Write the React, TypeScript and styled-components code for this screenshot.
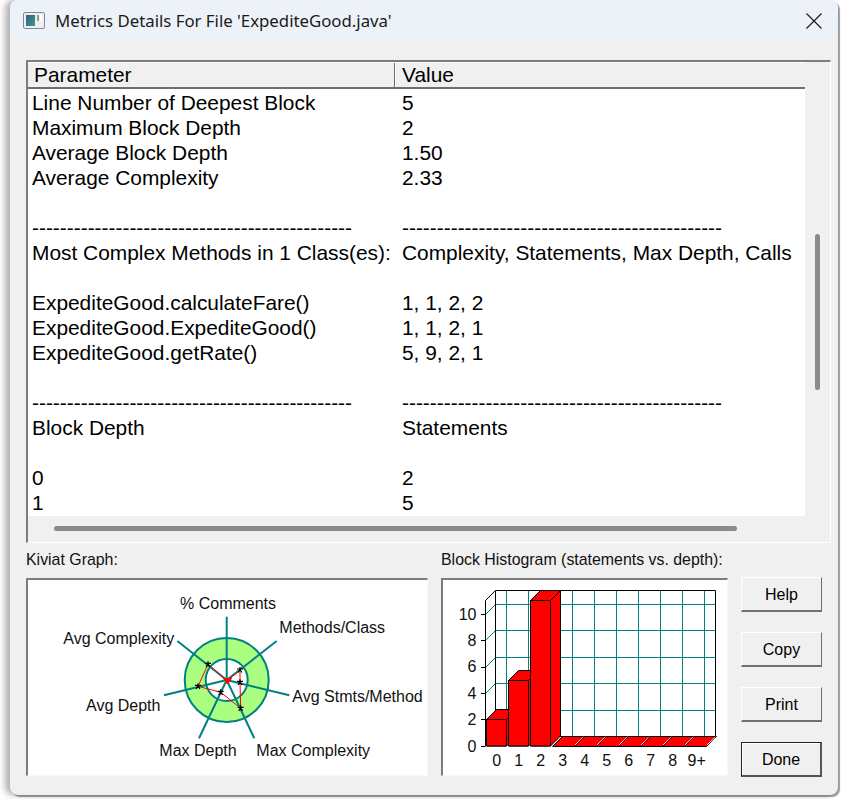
import React from "react";
import styled, { createGlobalStyle } from "styled-components";

const Global = createGlobalStyle`
  html, body { margin: 0; padding: 0; background: #fff; overflow: hidden; }
  #root { width: 846px; height: 799px; }
`;

const Page = styled.div`
  width: 846px;
  height: 799px;
  padding-left: 10px;
  box-sizing: border-box;
  overflow: hidden;
  font-family: "Liberation Sans", Arial, sans-serif;
  color: #000;
`;

const Win = styled.div`
  width: 828px;
  height: 795px;
  display: flex;
  flex-direction: column;
  background: #f0f0f0;
  border-radius: 8px;
  box-shadow: -5px 0 6px rgba(0, 0, 0, 0.3), 2px 2px 1px #9c9c9c;
`;

const TitleBar = styled.div`
  height: 41px;
  flex: none;
  display: flex;
  align-items: center;
  padding: 0 16px 0 13px;
  background: #edf2f8;
  border-radius: 8px 8px 0 0;
`;

const TitleText = styled.div`
  margin-left: 10px;
  flex: 1;
  font-family: "Noto Sans", sans-serif;
  font-size: 16.8px;
  color: #1a1a1a;
`;

const Body = styled.div`
  flex: 1;
  display: flex;
  flex-direction: column;
  padding: 19px 7px 0 16px;
`;

const ListFrame = styled.div`
  height: 483px;
  box-sizing: border-box;
  display: grid;
  grid-template-columns: 1fr 25px;
  grid-template-rows: 1fr 26px;
  border: 1px solid #fff;
  border-top: 2px solid #7d7d7d;
  border-left: 2px solid #7d7d7d;
`;

const TableArea = styled.div`
  background: #fff;
  overflow: hidden;
  min-width: 0;
`;

const HeaderRow = styled.div`
  display: grid;
  grid-template-columns: 367px 1fr;
  height: 27px;
  box-sizing: border-box;
  background: #f0f0f0;
  border-bottom: 2px solid #6e6e6e;
  border-top: 1px solid #fff;
  margin-bottom: 1px;
`;

const HeaderCell = styled.div<{ $last?: boolean }>`
  font-size: 20.9px;
  line-height: 24px;
  padding-left: ${(p) => (p.$last ? "7px" : "6px")};
  border-right: ${(p) => (p.$last ? "none" : "1px solid #6e6e6e")};
  box-shadow: ${(p) => (p.$last ? "inset 1px 0 0 #fff" : "none")};
`;

const Row = styled.div`
  display: grid;
  grid-template-columns: 370px 1fr;
  height: 25px;
  padding-left: 4px;
  font-size: 20.9px;
  line-height: 25px;
  white-space: nowrap;
`;

const VTrack = styled.div`
  padding-left: 10px;
`;

const VThumb = styled.div`
  width: 5px;
  height: 156px;
  margin-top: 172px;
  background: #8a8a8a;
  border-radius: 3px;
`;

const HTrack = styled.div`
  padding: 10px 0 0 26px;
`;

const HThumb = styled.div`
  width: 683px;
  height: 5px;
  background: #8a8a8a;
  border-radius: 3px;
`;

const Lower = styled.div`
  display: grid;
  grid-template-columns: 402px 287px 82px;
  column-gap: 13px;
  margin-top: 7px;
`;

const ChartCol = styled.div`
  display: flex;
  flex-direction: column;
`;

const ChartLabel = styled.div`
  height: 28px;
  font-size: 15.9px;
  line-height: 20px;
  color: #111;
  white-space: nowrap;
`;

const ChartFrame = styled.div`
  height: 198px;
  box-sizing: border-box;
  background: #fff;
  border: 1px solid #f8f8f8;
  border-top: 2px solid #7d7d7d;
  border-left: 2px solid #7d7d7d;
  svg { display: block; }
`;

const Buttons = styled.div`
  display: flex;
  flex-direction: column;
  gap: 20px;
  padding-top: 27px;
`;

const Btn = styled.button<{ $primary?: boolean }>`
  width: 81px;
  height: 35px;
  padding: 2px 0 0;
  font-family: "Liberation Sans", Arial, sans-serif;
  font-size: 16px;
  color: #000;
  background: #f0f0f0;
  border-style: solid;
  border-width: ${(p) => (p.$primary ? "1px 2px 2px 1px" : "1px 1px 2px 1px")};
  border-color: ${(p) =>
    p.$primary ? "#222 #555 #555 #222" : "#fff #707070 #707070 #fff"};
  box-shadow: ${(p) => (p.$primary ? "inset 1px 1px 0 #fff" : "none")};
`;

const rows: [string, string][] = [
  ["Line Number of Deepest Block", "5"],
  ["Maximum Block Depth", "2"],
  ["Average Block Depth", "1.50"],
  ["Average Complexity", "2.33"],
  ["", ""],
  ["-".repeat(46), "-".repeat(46)],
  ["Most Complex Methods in 1 Class(es):", "Complexity, Statements, Max Depth, Calls"],
  ["", ""],
  ["ExpediteGood.calculateFare()", "1, 1, 2, 2"],
  ["ExpediteGood.ExpediteGood()", "1, 1, 2, 1"],
  ["ExpediteGood.getRate()", "5, 9, 2, 1"],
  ["", ""],
  ["-".repeat(46), "-".repeat(46)],
  ["Block Depth", "Statements"],
  ["", ""],
  ["0", "2"],
  ["1", "5"],
];

const AppIcon = () => (
  <svg width="22" height="17" viewBox="0 0 22 17">
    <rect x="0.5" y="0.5" width="21" height="16" rx="1.5" fill="#eef0f0" stroke="#7d8a90" />
    <defs>
      <linearGradient id="ic" x1="0" y1="0" x2="1" y2="1">
        <stop offset="0" stopColor="#2a5f8f" />
        <stop offset="1" stopColor="#3f9a80" />
      </linearGradient>
    </defs>
    <rect x="3" y="3" width="9" height="11" fill="url(#ic)" />
    <rect x="14" y="3" width="2" height="6" fill="#8d9a9a" />
    <rect x="17" y="3" width="2" height="6" fill="#fff" />
  </svg>
);

const CloseIcon = () => (
  <svg width="16" height="16" viewBox="0 0 16 16">
    <path d="M0.5 0.5L15.5 15.5M15.5 0.5L0.5 15.5" stroke="#1a1a1a" strokeWidth="1.2" fill="none" />
  </svg>
);

const cx = 226.7;
const cy = 680;
const spokes = [
  [226.7, 616.7],
  [276.7, 641],
  [289.3, 695.3],
  [254.3, 738.3],
  [199, 738.3],
  [164, 695.3],
  [177.3, 641],
];
const poly = [
  [227.3, 680.7],
  [240, 670],
  [240, 682.3],
  [240.7, 708.3],
  [220.7, 692.3],
  [198, 686.3],
  [208, 664.3],
];
const kLabels: [string, number, number][] = [
  ["% Comments", 180, 609],
  ["Methods/Class", 279.3, 633.3],
  ["Avg Complexity", 63.3, 644],
  ["Avg Stmts/Method", 292.3, 702],
  ["Avg Depth", 86, 710.7],
  ["Max Depth", 159.3, 755.7],
  ["Max Complexity", 256.3, 755.7],
];

const Kiviat = () => (
  <svg width="400" height="195" viewBox="28 580 400 195" fontFamily="'Liberation Sans', Arial, sans-serif" fontSize="16">
    <circle cx={cx} cy={cy} r="42" fill="#aaff80" stroke="#008080" strokeWidth="2" />
    <circle cx={cx} cy={cy} r="21" fill="#fff" stroke="#008080" strokeWidth="2" />
    {spokes.map(([x, y], i) => (
      <line key={i} x1={cx} y1={cy} x2={x} y2={y} stroke="#008080" strokeWidth="2" />
    ))}
    <polygon points={poly.map((p) => p.join(",")).join(" ")} fill="none" stroke="#f00" strokeWidth="1" />
    {poly.slice(1).map(([x, y], i) => (
      <path
        key={i}
        d={`M${x - 3} ${y - 1}H${x + 3}M${x} ${y - 3}V${y + 1}M${x - 2} ${y + 2.5}L${x} ${y}L${x + 2} ${y + 2.5}`}
        stroke="#000"
        strokeWidth="1.2"
        fill="none"
      />
    ))}
    <path d="M223.5 678.5H231.5L227.5 684Z" fill="#f00" stroke="#f00" />
    {kLabels.map(([t, x, y]) => (
      <text key={t} x={x} y={y} fill="#111">
        {t}
      </text>
    ))}
  </svg>
);

const wallH = [604.5, 630.5, 657.5, 683.5, 710.5];
const frontY = [746, 719.7, 693.3, 667, 640.7, 614.3];
const yLabels = ["0", "2", "4", "6", "8", "10"];
const xLabels = ["0", "1", "2", "3", "4", "5", "6", "7", "8", "9+"];

const Bar = ({ x, top, w = 20.4 }: { x: number; top: number; w?: number }) => (
  <g fill="#f00" stroke="#000" strokeWidth="1" strokeLinejoin="miter">
    <path d={`M${x} 746V${top}L${x + 10} ${top - 10}H${x + w + 10}V736L${x + w} 746Z`} />
    <path d={`M${x} ${top}H${x + w}V746H${x}Z`} />
    <path d={`M${x + w} ${top}L${x + w + 10} ${top - 10}`} />
  </g>
);

const Histogram = () => (
  <svg width="285" height="195" viewBox="443 580 285 195" fontFamily="'Liberation Sans', Arial, sans-serif" fontSize="16">
    {wallH.map((y) => (
      <g key={y}>
        <line x1="495.5" y1={y} x2="715.5" y2={y} stroke="#008080" strokeWidth="1" />
        <line x1="485.5" y1={y + 10} x2="495.5" y2={y} stroke="#008080" strokeWidth="1" />
      </g>
    ))}
    {Array.from({ length: 10 }, (_, i) => 506.5 + 22 * i).map((x) => (
      <line key={x} x1={x} y1="590.5" x2={x} y2="736.5" stroke="#008080" strokeWidth="1" />
    ))}
    <path d="M485.5 746V600.5L495.5 590.5H715.5V736.5M495.5 590.5V736.5H715.5" stroke="#000" fill="none" />
    {frontY.map((y) => (
      <line key={y} x1="481" y1={Math.floor(y) + 0.5} x2="485.5" y2={Math.floor(y) + 0.5} stroke="#000" />
    ))}
    {Array.from({ length: 7 }, (_, i) => 552.5 + 22 * i).map((x) => (
      <g key={x}>
        <path d={`M${x} 746.5L${x + 10} 736.5H${x + 32}L${x + 22} 746.5Z`} fill="#f00" stroke="#000" strokeWidth="1" />
        <line x1={x + 22.6} y1="745" x2={x + 31} y2="737" stroke="#fff" strokeWidth="1" />
      </g>
    ))}
    <Bar x={486.5} top={719.5} w={20} />
    <Bar x={508.5} top={680.5} w={20} />
    <Bar x={530.5} top={600.5} w={20} />
    {yLabels.map((t, i) => (
      <text key={t} x="476.5" y={751.5 - 26.4 * i} textAnchor="end" fill="#111">
        {t}
      </text>
    ))}
    {xLabels.map((t, i) => (
      <text key={t} x={i === 9 ? 696.7 : 496.7 + 22 * i} y="765.7" textAnchor="middle" fill="#111">
        {t}
      </text>
    ))}
  </svg>
);

export default function App() {
  return (
    <Page>
      <Global />
      <Win>
        <TitleBar>
          <AppIcon />
          <TitleText>Metrics Details For File 'ExpediteGood.java'</TitleText>
          <CloseIcon />
        </TitleBar>
        <Body>
          <ListFrame>
            <TableArea>
              <HeaderRow>
                <HeaderCell>Parameter</HeaderCell>
                <HeaderCell $last>Value</HeaderCell>
              </HeaderRow>
              {rows.map(([a, b], i) => (
                <Row key={i}>
                  <span>{a}</span>
                  <span>{b}</span>
                </Row>
              ))}
            </TableArea>
            <VTrack>
              <VThumb />
            </VTrack>
            <HTrack>
              <HThumb />
            </HTrack>
          </ListFrame>
          <Lower>
            <ChartCol>
              <ChartLabel>Kiviat Graph:</ChartLabel>
              <ChartFrame>
                <Kiviat />
              </ChartFrame>
            </ChartCol>
            <ChartCol>
              <ChartLabel>Block Histogram (statements vs. depth):</ChartLabel>
              <ChartFrame>
                <Histogram />
              </ChartFrame>
            </ChartCol>
            <Buttons>
              <Btn>Help</Btn>
              <Btn>Copy</Btn>
              <Btn>Print</Btn>
              <Btn $primary>Done</Btn>
            </Buttons>
          </Lower>
        </Body>
      </Win>
    </Page>
  );
}
